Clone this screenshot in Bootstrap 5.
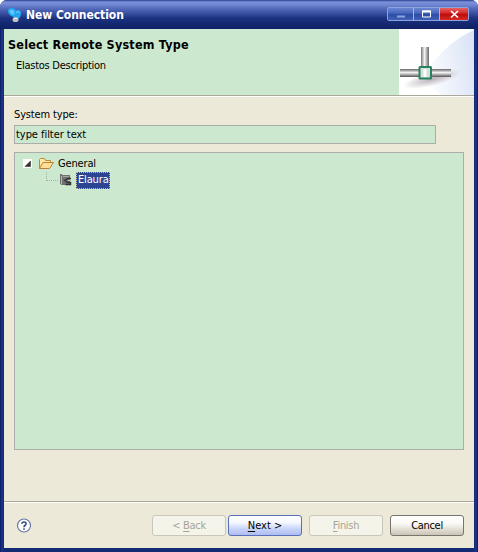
<!DOCTYPE html>
<html lang="en">
<head>
<meta charset="utf-8">
<title>New Connection</title>
<link href="https://cdn.jsdelivr.net/npm/bootstrap@5.3.0/dist/css/bootstrap.min.css" rel="stylesheet">
<style>
body{margin:0;background:#fff;overflow:hidden;font-family:"DejaVu Sans Condensed","DejaVu Sans",sans-serif;font-stretch:condensed;font-size:11px;line-height:14px;letter-spacing:-.15px;color:#000}
.dialog-frame{width:478px;height:552px;background:linear-gradient(90deg,#0b1a62 0,#1d378b 2px,#132a75 4px,#132a75 474px,#1d378b 476px,#0b1a62 478px);border-radius:7px 7px 0 0;padding:0 4px 4px;overflow:hidden}
.titlebar{height:29px;margin:0 -4px;padding:1px 9px 0 7px;background:linear-gradient(#2c4293 0,#5068b4 1px,#7d92dc 2px,#6f85d0 5px,#5168b8 9px,#354c9c 14px,#1c3380 18px,#132870 24px,#102064 29px)}
.title-text{font-size:12px;letter-spacing:-.05px;margin-left:3px}
.winbtns{height:14px;width:82px;border:1px solid #8ea2dd;border-radius:2px;overflow:hidden;margin-bottom:2px}
.winbtns span{width:26px;background:linear-gradient(#6b86d2,#4565bb 45%,#2c4ca5 50%,#4161b7);border-right:1px solid #a5b5e5}
.winbtns .close-cell{background:linear-gradient(#e66363,#d22424 45%,#b80c0c 50%,#d72a20);border:0}
.banner{height:66px;background:#cce8cf}
.heading-text{font-size:12.5px;line-height:16px;letter-spacing:.2px;padding:8px 0 0 4px}
.desc-text{padding:6px 0 0 12px;letter-spacing:-.26px}
.rule{height:2px;border-top:1px solid #aca899;background:#fff}
.content-pane{background:#ece9d8;height:404px;padding:11px 10px 0}
.field{width:422px;height:19px;border:1px solid #aaadaa;background:#cce8cf;padding:2px 1px;margin-top:3px;letter-spacing:-.05px}
.tree{height:298px;border:1px solid #aaadaa;background:#cce8cf;margin-top:8px;padding:2px 0 0 8px}
.tree-row{height:17px}
.selected-item{background:#2b4592;color:#fff;outline:1px dotted #d5b978;outline-offset:-1px;width:34px;height:17px;padding:1px 0 0 2px;margin-left:3px}
.footer-bar{height:45px;background:#ece9d8;padding:0 10px 0 12px}
.xp{width:74px;height:21px;padding:0;border:1px solid #77756e;border-radius:3px;font-size:11px;line-height:19px;letter-spacing:-.3px;color:#000;background:linear-gradient(#fff 0,#faf9f6 40%,#e3ded4 70%,#cbc3b8)}
.xp u{text-underline-offset:2px;text-decoration-thickness:1px}
.xp-off{color:#a5a495;border-color:#c9c7ba;background:#f5f4ea}
.xp-def{letter-spacing:0;margin-left:2px;border-color:#586fbb;background:linear-gradient(#fff 0,#f5f7ff 35%,#cbd6fb 65%,#aebcf0)}
.xp-gap{margin-left:7px}
</style>
<script src="https://cdn.jsdelivr.net/npm/bootstrap@5.3.0/dist/js/bootstrap.bundle.min.js"></script>
</head>
<body>
<main class="dialog-frame d-flex flex-column">
  <header class="titlebar d-flex align-items-center flex-shrink-0">
    <svg width="16" height="18" viewBox="0 0 16 18"><path d="M1 5Q1 2 4.500 2 8 2 9 4.500q3-1.500 4.500.5Q15 8 12.500 12L9 14 6.500 11Q1 9.500 1 5z" fill="#22a5f0"/><path d="M2.500 5q0-1.500 2-1.500Q7 3.500 7.500 6L7 9Q3 8.500 2.500 5z" fill="#5cc8fb"/><path d="M9 6.500q2-1.500 3.500 0" fill="none" stroke="#7fd5ff"/><ellipse cx="8.500" cy="13.500" rx="3" ry="2.600" fill="#bfc3c6"/><path d="M7 12.500h3" stroke="#e4e6e8"/></svg>
    <span class="title-text fw-bold text-white">New Connection</span>
    <div class="winbtns d-flex ms-auto">
      <span><svg class="d-block" width="25" height="12"><path d="M9 8.500h8" stroke="#8ca3de" stroke-width="2"/></svg></span>
      <span><svg class="d-block" width="25" height="12"><path d="M8.500 3v6h8V3z" fill="none" stroke="#fff"/><path d="M8 3.500h9" stroke="#fff" stroke-width="2"/></svg></span>
      <span class="close-cell flex-fill"><svg class="d-block" width="28" height="12"><path d="M11 3l7 6.500M18 3l-7 6.500" stroke="#fff" stroke-width="1.700"/></svg></span>
    </div>
  </header>
  <section class="banner d-flex flex-shrink-0">
    <div class="flex-fill">
      <div class="heading-text fw-bold">Select Remote System Type</div>
      <div class="desc-text">Elastos Description</div>
    </div>
    <svg width="75" height="66" viewBox="0 0 75 66" class="flex-shrink-0">
      <defs>
        <linearGradient id="sky" x1="0" y1=".6" x2="1" y2=".4"><stop offset="0" stop-color="#fff"/><stop offset="1" stop-color="#dbe4f6"/></linearGradient>
        <linearGradient id="pipeV"><stop offset="0" stop-color="#777"/><stop offset=".45" stop-color="#f4f4f4"/><stop offset="1" stop-color="#666"/></linearGradient>
        <linearGradient id="pipeH" x2="0" y2="1"><stop offset="0" stop-color="#666"/><stop offset=".45" stop-color="#f4f4f4"/><stop offset="1" stop-color="#555"/></linearGradient>
        <radialGradient id="shade"><stop offset="0" stop-color="#b9afb9"/><stop offset="1" stop-color="#b9afb9" stop-opacity="0"/></radialGradient>
      </defs>
      <rect width="75" height="66" fill="#fff"/>
      <path d="M22 50Q45 14 75 1v65H42z" fill="url(#sky)"/>
      <ellipse cx="33" cy="50" rx="30" ry="7" fill="url(#shade)" transform="rotate(-14 33 50)"/>
      <rect x="22" y="18" width="8" height="21" fill="url(#pipeV)"/>
      <rect x="1" y="40" width="51" height="8" fill="url(#pipeH)"/>
      <rect x="20.500" y="38" width="11.500" height="11.500" rx=".5" fill="#d6dfd9" stroke="#268260" stroke-width="2"/>
      <path d="M26 40v8" stroke="#fff" stroke-width="3"/>
    </svg>
  </section>
  <div class="rule flex-shrink-0"></div>
  <section class="content-pane flex-shrink-0">
    <div>System type:</div>
    <div class="field">type filter text</div>
    <div class="tree">
      <div class="tree-row d-flex align-items-center">
        <svg width="10" height="9"><path d="M0 0h9v9H0z" fill="#fff"/><path d="M2 7.500l5.500-5.500v5.500z" fill="#333" stroke="#222" stroke-width=".5"/></svg>
        <svg class="ms-1" width="20" height="16" viewBox="0 0 20 16"><path d="M2.500 12.500V3.500l1-1h4l1 2h5v3" fill="#ffe9a8" stroke="#c08a3c"/><path d="M2.500 12.500L6 6.500h10.500l-4 6z" fill="#ffdf98" stroke="#bd8132"/></svg>
        <span class="ps-px" style="margin-left:1px">General</span>
      </div>
      <div class="tree-row d-flex align-items-center">
        <svg width="50" height="17"><path d="M23.500 0v9M24 8.500h12" fill="none" stroke="#a5b3a2" stroke-dasharray="1 1"/><path d="M37 2h2v1h8v10h-8l-2-1z" fill="#707070"/><path d="M40 4.500h6" stroke="#a9a9a9"/><path d="M38.500 4v8" stroke="#b5b5b5"/><path d="M48 6.500h-3l-3 2 3 2h2.500v2h-5" fill="none" stroke="#333" stroke-width="1.500"/><path d="M44.500 8.500h3" stroke="#bbb"/></svg>
        <span class="selected-item">Elaura</span>
      </div>
    </div>
  </section>
  <div class="rule flex-shrink-0"></div>
  <footer class="footer-bar d-flex align-items-center flex-shrink-0">
    <svg width="16" height="16" viewBox="0 0 16 16"><circle cx="8" cy="7.500" r="6.500" fill="#fff" stroke="#6678a6" stroke-width="1.200"/><path d="M5.900 5.800Q6 4 8 4t2.100 1.700Q10.100 6.700 8.900 7.500 8 8.100 8 9.200M8 10.300v1.500" fill="none" stroke="#344a80" stroke-width="1.600"/></svg>
    <button class="btn xp xp-off ms-auto">&lt; <u>B</u>ack</button>
    <button class="btn xp xp-def"><u>N</u>ext &gt;</button>
    <button class="btn xp xp-off xp-gap"><u>F</u>inish</button>
    <button class="btn xp xp-gap">Cancel</button>
  </footer>
</main>
</body>
</html>
